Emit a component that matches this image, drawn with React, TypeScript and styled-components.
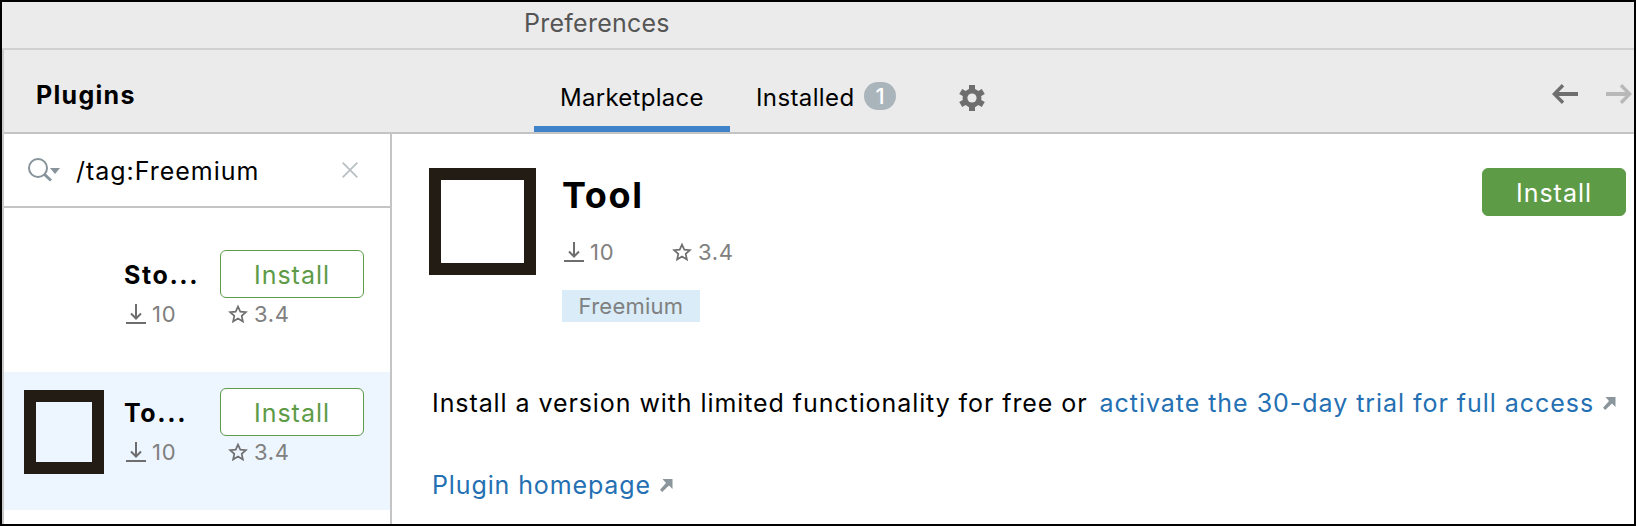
import React from "react";
import styled, { createGlobalStyle } from "styled-components";

const Global = createGlobalStyle`
  * { box-sizing: border-box; }
  html, body { margin: 0; padding: 0; }
  body { font-family: Inter, "Liberation Sans", sans-serif; color: #000; background: #fff; }
  svg { display: block; flex: none; }
`;

const Window = styled.div`
  width: 1636px;
  height: 526px;
  border: 2px solid #000;
  display: flex;
  flex-direction: column;
  overflow: hidden;
  background: #fff;
`;

const TitleBar = styled.div`
  height: 48px;
  flex: none;
  background: #ebebeb;
  border-bottom: 2px solid #d0d0d0;
  padding-left: 522px;
`;

const Text = styled.span<{ $size: number; $ls?: number; $weight?: number; $color?: string; $lh?: number }>`
  display: block;
  white-space: nowrap;
  font-size: ${(p) => p.$size}px;
  line-height: ${(p) => p.$lh ?? 32}px;
  letter-spacing: ${(p) => p.$ls ?? 0}px;
  font-weight: ${(p) => p.$weight ?? 400};
  color: ${(p) => p.$color ?? "#000"};
`;

const Frame = styled.div`
  flex: 1;
  min-height: 0;
  display: flex;
  flex-direction: column;
  border-left: 2px solid #c9c9c9;
`;

const Header = styled.div`
  height: 84px;
  flex: none;
  display: flex;
  background: #ebebeb;
  border-bottom: 2px solid #c4c4c4;
`;

const HeaderTitle = styled.div`
  width: 530px;
  padding: 29px 0 0 32px;
`;

const Tab = styled.div<{ $active?: boolean; $width: number }>`
  width: ${(p) => p.$width}px;
  height: 82px;
  display: flex;
  justify-content: space-between;
  padding: 32px 0 0 26px;
  border-bottom: 6px solid ${(p) => (p.$active ? "#4083c9" : "transparent")};
`;

const Badge = styled.span`
  width: 32px;
  height: 28px;
  border-radius: 14px;
  background: #a9b4bb;
  display: flex;
  justify-content: center;
`;

const GearSlot = styled.div`
  padding: 35px 0 0 63px;
`;

const Nav = styled.div`
  display: flex;
  gap: 28px;
  margin-left: auto;
  padding: 33px 2px 0 0;
`;

const Body = styled.div`
  flex: 1;
  min-height: 0;
  display: flex;
`;

const Sidebar = styled.div`
  width: 388px;
  flex: none;
  border-right: 2px solid #c4c4c4;
`;

const Search = styled.div`
  height: 74px;
  display: flex;
  padding: 20px 32px 0 24px;
  border-bottom: 2px solid #c4c4c4;
`;

const SearchText = styled.div`
  flex: 1;
  padding: 1px 0 0 16px;
`;

const Item = styled.div<{ $height: number; $top: number; $selected?: boolean }>`
  height: ${(p) => p.$height}px;
  padding: ${(p) => p.$top}px 26px 0 20px;
  display: flex;
  background: ${(p) => (p.$selected ? "#edf5ff" : "#fff")};
`;

const Logo = styled.div<{ $w: number; $h: number; $top?: number; $hidden?: boolean }>`
  width: ${(p) => p.$w}px;
  height: ${(p) => p.$h}px;
  margin-top: ${(p) => p.$top ?? 0}px;
  flex: none;
  border: 12px solid #231c15;
  visibility: ${(p) => (p.$hidden ? "hidden" : "visible")};
`;

const ItemInfo = styled.div`
  margin-left: 20px;
  flex: 1;
`;

const ItemTop = styled.div`
  display: flex;
  justify-content: space-between;
`;

const Button = styled.button<{ $filled?: boolean }>`
  width: 144px;
  height: 48px;
  flex: none;
  padding: 1px 0 0;
  font-family: inherit;
  border-radius: 6px;
  border: 1px solid #5d9b47;
  background: ${(p) => (p.$filled ? "#5d9b47" : "#fff")};
  display: flex;
  align-items: center;
  justify-content: center;
`;

const Stats = styled.div<{ $top: number; $gap: number }>`
  display: flex;
  gap: ${(p) => p.$gap}px;
  margin: ${(p) => p.$top}px 0 0 2px;
`;

const Stat = styled.div`
  display: flex;
  width: 50px;
  gap: 6px;
`;

const Main = styled.div`
  flex: 1;
  min-width: 0;
  padding: 34px 8px 0 37px;
`;

const Hero = styled.div`
  display: flex;
`;

const HeroInfo = styled.div`
  flex: 1;
  margin-left: 26px;
  height: 154px;
`;

const Tag = styled.div`
  width: 138px;
  height: 32px;
  margin-top: 28px;
  background: #d9ecf8;
  display: flex;
  justify-content: center;
`;

const Line = styled.div<{ $top: number }>`
  display: flex;
  gap: 12px;
  margin: ${(p) => p.$top}px 0 0 3px;
`;

const Link = styled.a`
  display: flex;
  gap: 9px;
`;

const ArrowSlot = styled.span`
  padding-top: 10px;
`;

const DownloadIcon = () => (
  <svg width="20" height="20" viewBox="0 0 20 20" fill="none" stroke="#6e6e6e" strokeWidth="2">
    <path d="M10 0v14M5 9.5l5 5 5-5M0 19h20" />
  </svg>
);

const StarIcon = () => (
  <svg width="20" height="20" viewBox="0 0 20 20" fill="none" stroke="#6e6e6e" strokeWidth="1.7">
    <path d="M10 2.6l2.3 5 5.6.6-4.2 3.7 1.2 5.6-4.9-2.9-4.9 2.9 1.2-5.6-4.2-3.7 5.6-.6z" />
  </svg>
);

const SearchIcon = () => (
  <svg width="32" height="28" viewBox="0 0 32 28" fill="none">
    <circle cx="10" cy="14" r="9" stroke="#87939a" strokeWidth="2" />
    <path d="M16 20l7 6.5" stroke="#87939a" strokeWidth="3" />
    <path d="M22 14h10l-5 6z" fill="#87939a" />
  </svg>
);

const CloseIcon = () => (
  <svg width="16" height="32" viewBox="0 0 16 32" stroke="#b9c0c4" strokeWidth="1.8">
    <path d="M.7 8.7l14.6 14.6M15.3 8.7L.7 23.3" />
  </svg>
);

const GearIcon = () => (
  <svg width="26" height="26" viewBox="-13 -13 26 26">
    <g fill="#6e6e6e">
      {[0, 60, 120].map((a) => (
        <rect key={a} x="-3" y="-13" width="6" height="26" transform={"rotate(" + a + ")"} />
      ))}
    </g>
    <circle r="7" fill="none" stroke="#6e6e6e" strokeWidth="5" />
    <circle r="4.6" fill="#ebebeb" />
  </svg>
);

const NavArrow = ({ color, flip }: { color: string; flip?: boolean }) => (
  <svg width="26" height="22" viewBox="0 0 26 22" fill="none" stroke={color}>
    <g transform={flip ? "matrix(-1 0 0 1 26 0)" : undefined}>
      <path d="M26 11H3" strokeWidth="4" />
      <path d="M11 2.3L2.3 11l8.7 8.7" strokeWidth="3.4" />
    </g>
  </svg>
);

const ExternalIcon = () => (
  <svg width="13" height="13" viewBox="0 0 13 13">
    <path d="M2.5 0H12.5v10L9 6.6 2.2 13 0 10.8 6 4z" fill="#8b959c" />
  </svg>
);

const StatRow = ({ top, gap }: { top: number; gap: number }) => (
  <Stats $top={top} $gap={gap}>
    <Stat>
      <DownloadIcon />
      <Text $size={22} $lh={20} $ls={0.9} $color="#808080">10</Text>
    </Stat>
    <Stat>
      <StarIcon />
      <Text $size={22} $lh={20} $ls={0.6} $color="#808080">3.4</Text>
    </Stat>
  </Stats>
);

const PluginItem = ({ name, selected }: { name: string; selected?: boolean }) => (
  <Item $height={selected ? 138 : 164} $top={selected ? 16 : 42} $selected={selected}>
    <Logo $w={80} $h={84} $top={2} $hidden={!selected} />
    <ItemInfo>
      <ItemTop>
        <Text $size={25} $weight={700} $lh={51} $ls={1.6}>{name}</Text>
        <Button>
          <Text $size={25} $color="#5d9b47" $ls={0.96}>Install</Text>
        </Button>
      </ItemTop>
      <StatRow top={3} gap={52} />
    </ItemInfo>
  </Item>
);

export default function App() {
  return (
    <>
      <Global />
      <Window>
        <TitleBar>
          <Text $size={25} $lh={42} $ls={0.25} $color="#555">Preferences</Text>
        </TitleBar>
        <Frame>
          <Header>
            <HeaderTitle>
              <Text $size={25} $weight={700} $ls={1.3}>Plugins</Text>
            </HeaderTitle>
            <Tab $active $width={196}>
              <Text $size={24} $ls={0.28}>Marketplace</Text>
            </Tab>
            <Tab $width={166}>
              <Text $size={24} $ls={0.38}>Installed</Text>
              <Badge>
                <Text $size={22} $lh={29} $weight={500} $color="#fff">1</Text>
              </Badge>
            </Tab>
            <GearSlot>
              <GearIcon />
            </GearSlot>
            <Nav>
              <NavArrow color="#6e6e6e" />
              <NavArrow color="#b8b8b8" flip />
            </Nav>
          </Header>
          <Body>
            <Sidebar>
              <Search>
                <SearchIcon />
                <SearchText>
                  <Text $size={25} $ls={0.97}>/tag:Freemium</Text>
                </SearchText>
                <CloseIcon />
              </Search>
              <PluginItem name="Sto..." />
              <PluginItem name="To..." selected />
            </Sidebar>
            <Main>
              <Hero>
                <Logo $w={107} $h={107} />
                <HeroInfo>
                  <Text $size={36} $weight={700} $lh={54} $ls={1.6}>Tool</Text>
                  <StatRow top={20} gap={58} />
                  <Tag>
                    <Text $size={22} $ls={0.25} $color="#808080">Freemium</Text>
                  </Tag>
                </HeroInfo>
                <Button $filled>
                  <Text $size={25} $color="#fff" $ls={0.96}>Install</Text>
                </Button>
              </Hero>
              <Line $top={65}>
                <Text $size={25} $ls={0.92}>Install a version with limited functionality for free or</Text>
                <Link>
                  <Text $size={25} $ls={0.96} $color="#2470b3">activate the 30-day trial for full access</Text>
                  <ArrowSlot><ExternalIcon /></ArrowSlot>
                </Link>
              </Line>
              <Line $top={50}>
                <Link>
                  <Text $size={25} $ls={0.88} $color="#2470b3">Plugin homepage</Text>
                  <ArrowSlot><ExternalIcon /></ArrowSlot>
                </Link>
              </Line>
            </Main>
          </Body>
        </Frame>
      </Window>
    </>
  );
}
